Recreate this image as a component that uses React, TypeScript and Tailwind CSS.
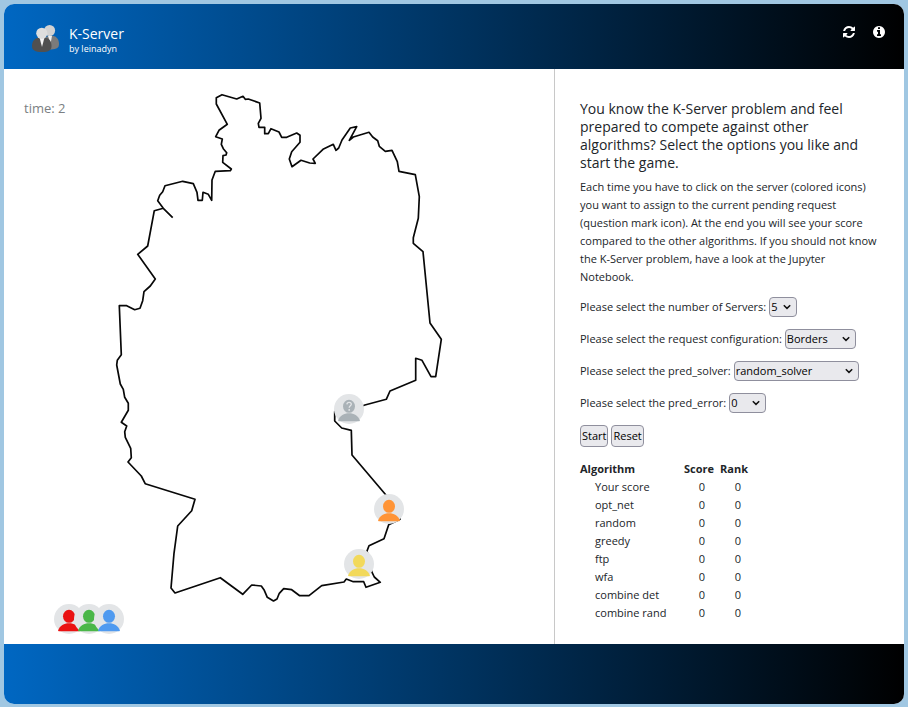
import type { ReactNode } from 'react'

const OUTLINE =
  'M172.7 217.7L163.3 208.3L157.7 200.7L159.7 195.3L162.7 191.7L165 185.7L182.7 181.3L193.3 183.7L197 192.3L198 200.3L202.3 200.3L203 192.3L208.3 194.3L211.7 200.3L212 180L215.3 171.3L230.3 170.7L231.3 169L222.7 162.3L223 155.7L226 155L226.7 152.7L223.3 148.7L221.3 144.3L222.3 139L215.7 136.7L219 130.3L227.3 124.3L216.3 104L216.3 97.7L222 94.7L236.7 99L243 96.3L245.3 99.3L248.3 99L259.7 103L261 118.3L258.3 123.3L259 127.3L264.7 127.3L264.7 133.7L268.3 133.7L271 128.7L279 132L281.7 137.3L286.7 137.3L296.7 133L300 135.3L300 142.3L291.7 151.7L289.3 159L292 166.7L301 160.3L309.7 163L315.3 163.3L313 159L323 149.3L333.3 144.3L336 150.3L338.7 148L342 140L350.3 128L356.7 126.7L349.3 140.3L353.3 137L369 132.3L372.7 137L377.7 140.7L379.3 146.3L385.3 151.3L392 150.3L397.3 161.7L399 171.3L415.3 174.7L419.3 196.7L418.3 218.3L413.3 237.7L413.3 243.3L423 251.7L430 323L441.3 339.3L435.7 376.7L431 376.7L422 360.3L415.7 358.3L415.7 380.3L390 391L386.3 399.3L364 405.3L334.7 411.7L334.7 421L341.7 428L351.3 430.3L352 455L385.3 494.3L397 508L400 519.3L388.7 524.7L384 538.7L369 545.7L367 551L371.7 571.7L374.3 577L380.3 582.3L366 587.3L363.7 581.7L353.3 581.7L346.3 579L344 582L321.7 585.7L309 595.7L299.7 595.7L291.7 589.7L283.7 588.7L279.3 593.3L277 599L273.5 601L267.3 597.3L264.3 590.3L261.3 586L251.7 585L242.7 594.3L220.3 577.7L175 593L171 588L174 553.3L177.7 526L191.7 510.7L195 499.3L145.2 483.7L141.3 476L128 462L131.3 457.7L130.7 448.3L125.3 437.3L124.7 431.7L126.7 426L121.3 422.3L128.3 410.3L128.3 403.3L124.7 397.3L123.3 389.3L120.3 384L116.7 365L117.3 360.3L121.3 354.7L119.3 305.7L126.7 305.7L134.7 309.7L140 308.3L142.7 300.7L144 291.7L150.3 286L155.3 279L137.7 254.3L147.7 246L154.3 210.7L163.3 208.3'

const servers = [
  { name: 'Red server', left: 50, top: 535, color: '#ea1212' },
  { name: 'Green server', left: 70, top: 535, color: '#4ab748' },
  { name: 'Blue server', left: 90, top: 535, color: '#4f9af0' },
  { name: 'Orange server', left: 370, top: 425, color: '#ff9436' },
  { name: 'Yellow server', left: 340, top: 480, color: '#f2d95b' },
]

const algorithms = ['Your score', 'opt_net', 'random', 'greedy', 'ftp', 'wfa', 'combine det', 'combine rand']

function Person({ color, pending = false }: { color: string; pending?: boolean }) {
  return (
    <svg viewBox="0 0 30 30" className="block size-[30px]" aria-hidden="true">
      <circle cx="15" cy="15" r="15" fill="#e3e5e7" />
      <ellipse cx="15" cy="12.3" rx="6" ry="6.5" fill={color} />
      <path d="M4 26.5C6 21.5 10 19.2 15 19.2S24 21.5 26 26.5L25.3 27.2H4.7Z" fill={color} />
      {pending && (
        <g>
          <path d="M12.9 10.4C13 8.9 13.9 8.3 15.1 8.3C16.5 8.3 17.3 9.1 17.3 10.2C17.3 11.7 15.2 11.9 15.2 13.8" fill="none" stroke="#e3e5e7" strokeWidth="1.3" />
          <circle cx="15.2" cy="15.9" r="0.9" fill="#e3e5e7" />
        </g>
      )}
    </svg>
  )
}

function Logo() {
  return (
    <svg viewBox="0 0 28 28" className="size-7" aria-hidden="true">
      <path d="M12 25V17C12 13 15 10.500 19 10.500C24 10.500 27 14 27 19C27 22.500 25 24 19 24.500Z" fill="#7b7b7b" />
      <path d="M16 11H20L18.500 19Z" fill="#eee" />
      <circle cx="17.600" cy="5.500" r="5.500" fill="#d2d2d2" />
      <path d="M0 21C0 16 3 12.500 8 12.500H12C17 12.500 19.500 16 19.500 21C19.500 25 17 27 10 27S0 25 0 21Z" fill="#505050" />
      <path d="M7.500 12.500H12.500L10 22Z" fill="#f4f4f4" />
      <circle cx="9.800" cy="8.300" r="5.600" fill="#dedede" />
    </svg>
  )
}

function Choice({ id, label, width, options }: { id: string; label: string; width: string; options: string[] }) {
  return (
    <div className="flex h-5 items-center gap-[3px]">
      <label htmlFor={id}>{label}</label>
      <span className={`relative block h-5 ${width}`}>
        <select id={id} className="block h-5 w-full appearance-none rounded border border-[#8f8f9d] bg-[#e9e9ed] pl-px leading-4 text-black">
          {options.map((o) => (
            <option key={o}>{o}</option>
          ))}
        </select>
        <svg viewBox="0 0 8 8" className="pointer-events-none absolute top-1.5 right-1.5 size-2" aria-hidden="true">
          <path d="M0.800 2.200L4 5.400L7.200 2.200" fill="none" stroke="#111" strokeWidth="1.500" />
        </svg>
      </span>
    </div>
  )
}

function ActionButton({ children }: { children: ReactNode }) {
  return <button type="button" className="h-[22px] rounded border border-[#8f8f9d] bg-[#e9e9ed] px-px text-black">{children}</button>
}

export default function App() {
  return (
    <div className="min-h-screen bg-[#a0c7e2] px-1 pt-1 pb-[3px] font-['Open_Sans',sans-serif] text-[11px] leading-[18px] text-[#212529]">
      <div className="overflow-hidden rounded-[10px] bg-white">
        <header className="flex h-[65px] items-center justify-between bg-linear-to-r/srgb from-[#0067c2] to-black pr-[19px] pl-7 text-white">
          <div className="flex items-center gap-[9px] pt-1">
            <Logo />
            <div className="pt-0.5">
              <h1 className="text-sm leading-[18px]">K-Server</h1>
              <p className="text-[9px] leading-3">by leinadyn</p>
            </div>
          </div>
          <nav className="flex gap-[18px] pb-[9px]">
            <button type="button" aria-label="Restart">
              <svg viewBox="0 0 1536 1536" className="size-3" fill="currentColor" aria-hidden="true">
                <path d="M1511 928q0 5-1 7-64 268-268 434.500T764 1536q-146 0-282.500-55T238 1324l-129 129q-19 19-45 19t-45-19-19-45V960q0-26 19-45t45-19h448q26 0 45 19t19 45-19 45l-137 137q71 66 161 102t187 36q134 0 250-65t186-179q11-17 53-117 8-23 30-23h192q13 0 22.500 9.500t9.500 22.500zm25-800v448q0 26-19 45t-45 19h-448q-26 0-45-19t-19-45 19-45l138-138Q969 256 768 256q-134 0-250 65T332 500q-11 17-53 117-8 23-30 23H50q-13 0-22.500-9.500T18 608v-7q65-268 270-434.500T768 0q146 0 284 55.500T1297 212l130-129q19-19 45-19t45 19 19 45z" />
              </svg>
            </button>
            <button type="button" aria-label="Information">
              <svg viewBox="0 0 1536 1536" className="size-3" fill="currentColor" aria-hidden="true">
                <path d="M1024 1248v-160q0-14-9-23t-23-9h-96V544q0-14-9-23t-23-9H544q-14 0-23 9t-9 23v160q0 14 9 23t23 9h96v320h-96q-14 0-23 9t-9 23v160q0 14 9 23t23 9h448q14 0 23-9t9-23zM896 352V192q0-14-9-23t-23-9H672q-14 0-23 9t-9 23v160q0 14 9 23t23 9h192q14 0 23-9t9-23zM1536 768q0 209-103 385.500T1153.500 1433 768 1536t-385.500-103T103 1153.500 0 768t103-385.500T382.500 103 768 0t385.500 103T1433 382.500 1536 768z" />
              </svg>
            </button>
          </nav>
        </header>

        <main className="grid min-h-[575px] grid-cols-[minmax(0,11fr)_minmax(0,7fr)]">
          <section className="relative">
            <p className="px-5 pt-[30px] text-[13px] text-[#7b7f83]">time: 2</p>
            <svg viewBox="4 69 550 575" className="absolute top-0 left-0 h-[575px] w-[550px]" aria-hidden="true">
              <path d={OUTLINE} fill="none" stroke="#080808" strokeWidth="1.700" strokeLinejoin="round" />
            </svg>
            <span className="absolute top-[325px] left-[330px]">
              <Person color="#aab2b7" pending />
            </span>
            {servers.map((s) => (
              <button key={s.name} type="button" aria-label={s.name} className="absolute rounded-full" style={{ left: s.left, top: s.top }}>
                <Person color={s.color} />
              </button>
            ))}
          </section>

          <section className="border-l border-[#c8c8c8] pt-[31px] pr-6 pl-[25px]">
            <h2 className="mb-1.5 text-sm leading-[18px]">
              You know the K-Server problem and feel prepared to compete against other algorithms? Select the options you like and start the game.
            </h2>
            <p>
              Each time you have to click on the server (colored icons) you want to assign to the current pending request (question mark icon). At the end you will see your score compared to the other algorithms. If you should not know the K-Server problem, have a look at the Jupyter Notebook.
            </p>
            <form className="mt-[11px] flex flex-col gap-3">
              <Choice id="servers" label="Please select the number of Servers:" width="w-7" options={['5', '4', '3', '2']} />
              <Choice id="config" label="Please select the request configuration:" width="w-[71px]" options={['Borders', 'Random']} />
              <Choice id="solver" label="Please select the pred_solver:" width="w-[125px]" options={['random_solver', 'greedy_solver']} />
              <Choice id="error" label="Please select the pred_error:" width="w-[37px]" options={['0', '1', '2']} />
              <div className="flex gap-[3px]">
                <ActionButton>Start</ActionButton>
                <ActionButton>Reset</ActionButton>
              </div>
            </form>
            <table className="mt-[13px] table-fixed">
              <thead>
                <tr className="text-left">
                  <th className="w-[104px]">Algorithm</th>
                  <th className="w-9">Score</th>
                  <th className="w-9">Rank</th>
                </tr>
              </thead>
              <tbody>
                {algorithms.map((name) => (
                  <tr key={name}>
                    <td className="pl-[15px]">{name}</td>
                    <td className="text-center">0</td>
                    <td className="text-center">0</td>
                  </tr>
                ))}
              </tbody>
            </table>
          </section>
        </main>
        <footer className="h-[60px] bg-linear-to-r/srgb from-[#0067c2] to-black" />
      </div>
    </div>
  )
}
